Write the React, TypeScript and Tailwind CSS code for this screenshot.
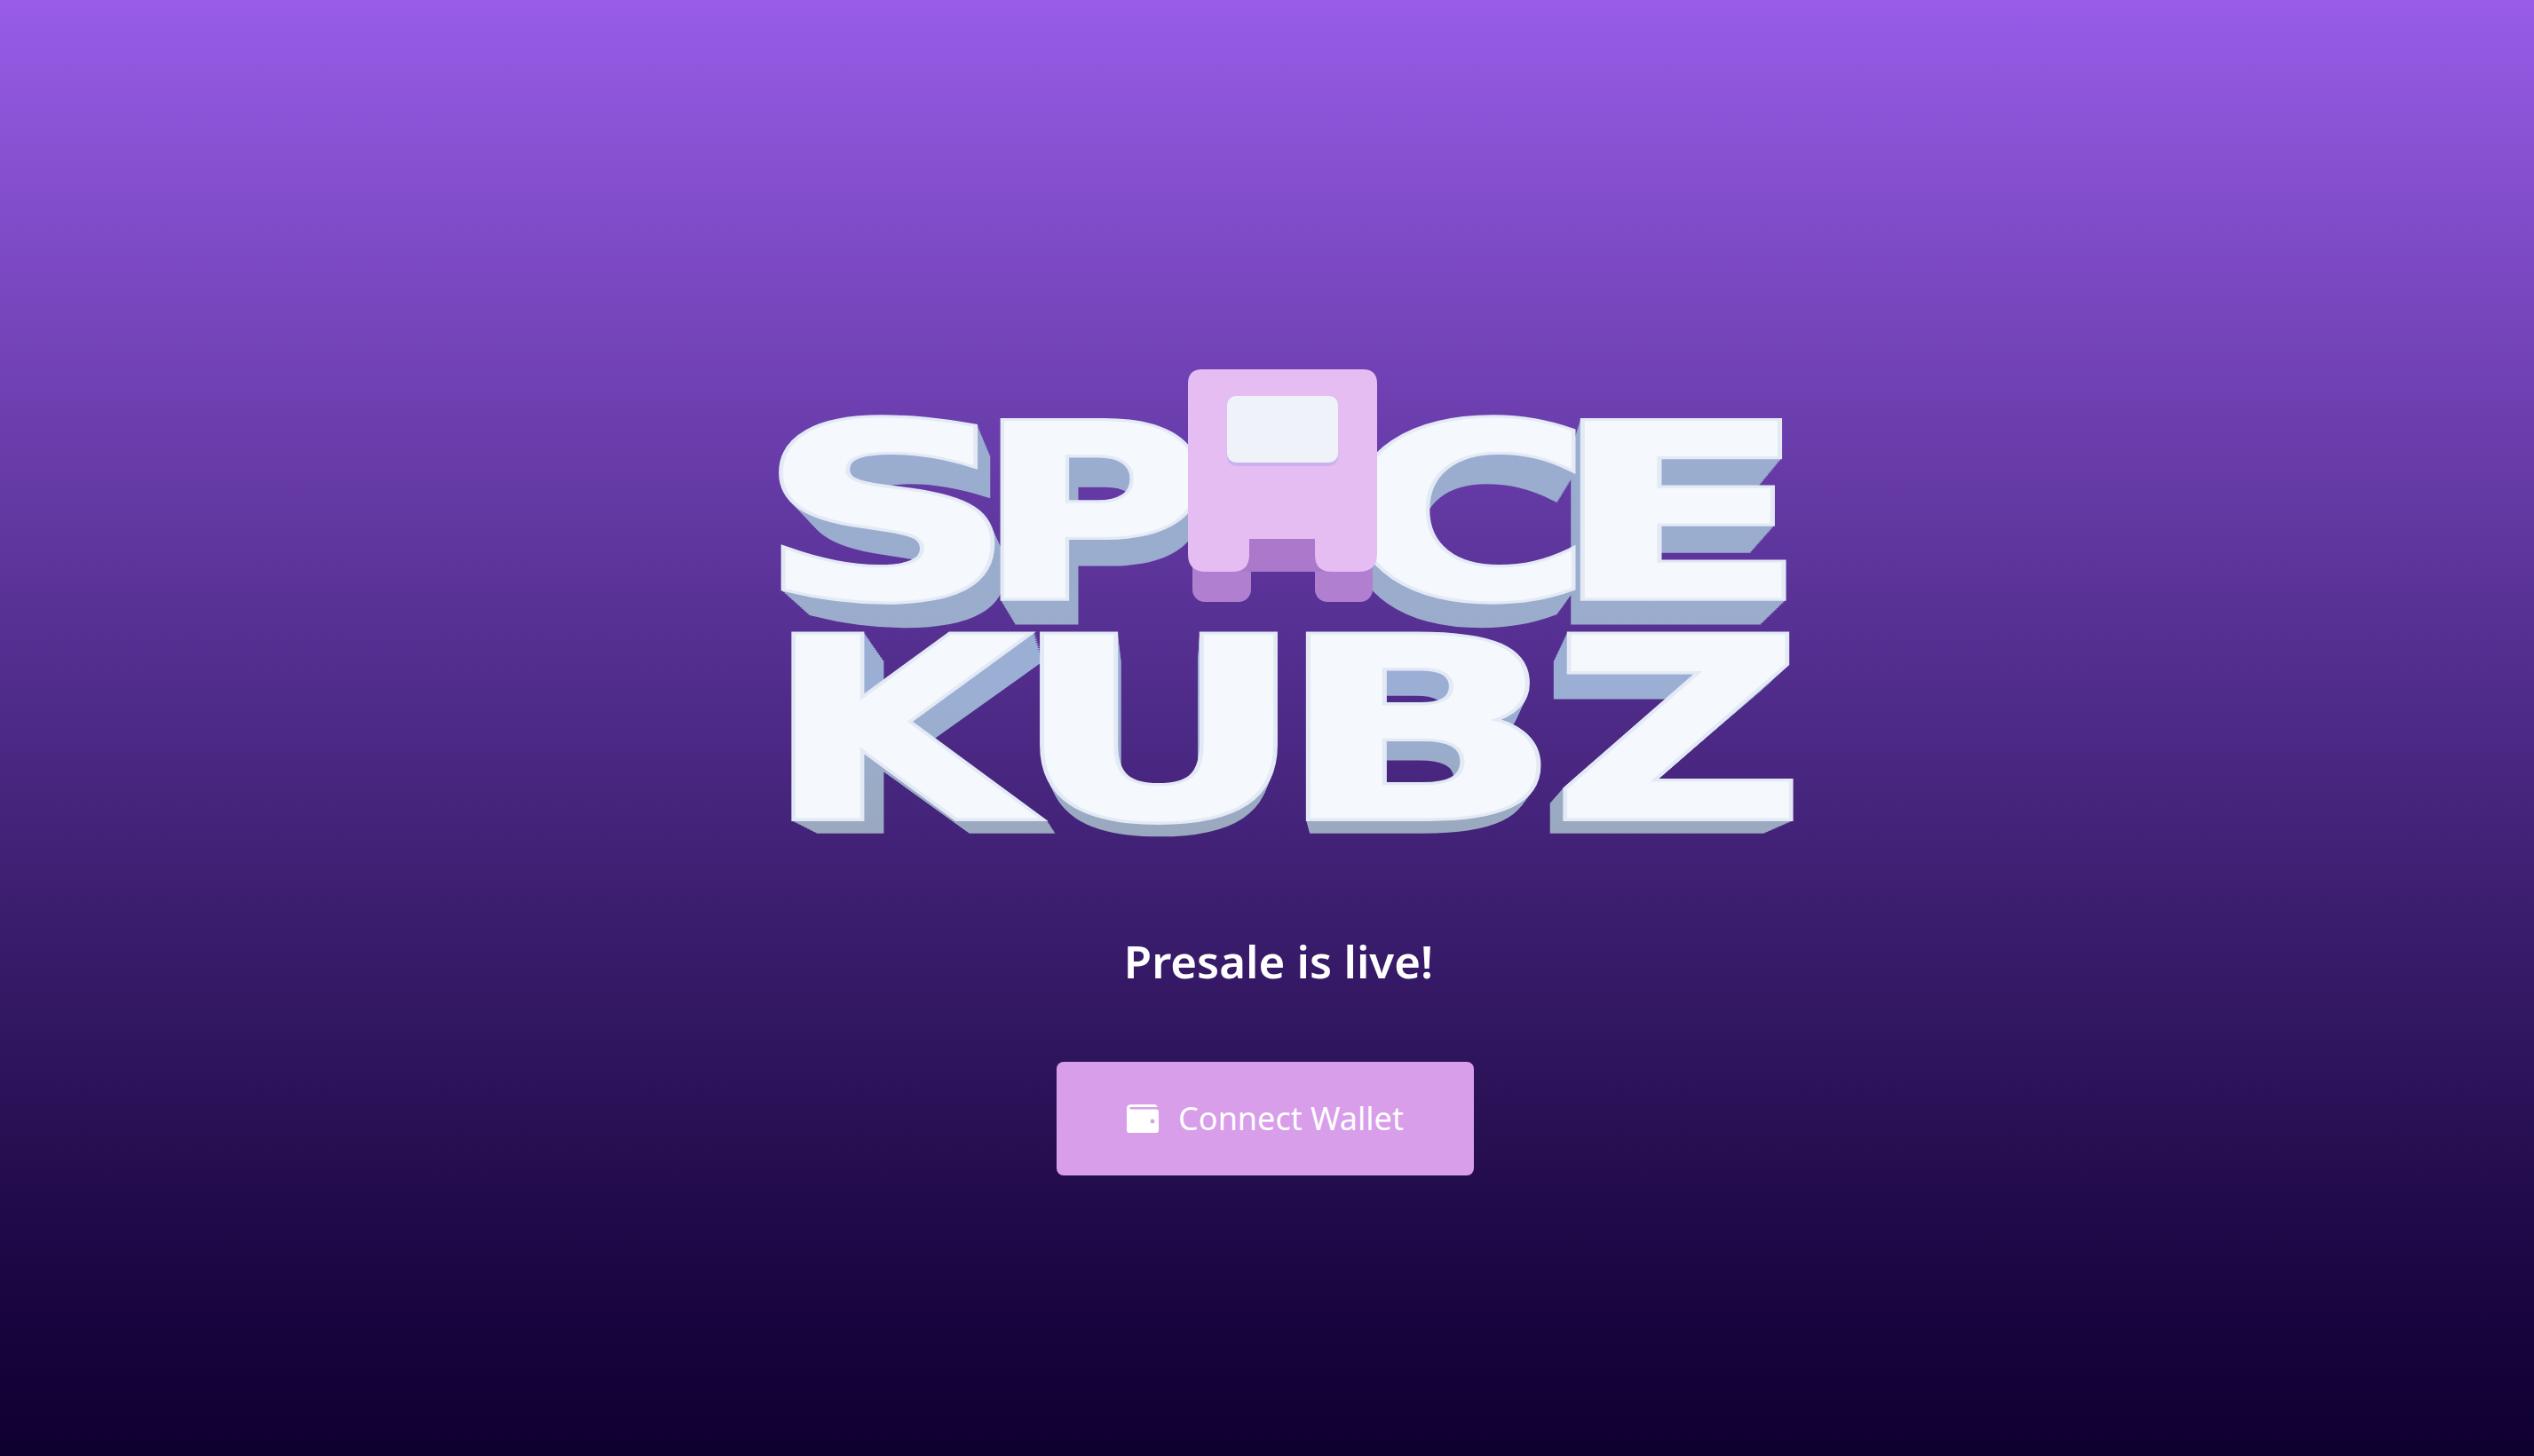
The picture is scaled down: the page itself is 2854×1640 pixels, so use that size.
type Letter = {
  ch: string;
  x0: number; // ink left, page px
  x1: number; // ink right, page px
  inkL: number;
  inkR: number;
  cx: number; // where the depth lines run to
};

// ink edges are per 100 font units
const TOP: Letter[] = [
  { ch: "S", x0: 878, x1: 1120, inkL: 6, inkR: 66, cx: 1300 },
  { ch: "P", x0: 1131, x1: 1350, inkL: 9, inkR: 70, cx: 1350 },
  { ch: "C", x0: 1530, x1: 1773, inkL: 5, inkR: 68, cx: 1500 },
  { ch: "E", x0: 1785, x1: 2010, inkL: 9, inkR: 62, cx: 1630 },
];

const BOTTOM: Letter[] = [
  { ch: "K", x0: 896, x1: 1162, inkL: 9, inkR: 79, cx: 1317 },
  { ch: "U", x0: 1174, x1: 1436, inkL: 8.5, inkR: 72.7, cx: 1317 },
  { ch: "B", x0: 1476, x1: 1733, inkL: 9, inkR: 70, cx: 1530 },
  { ch: "Z", x0: 1760, x1: 2018, inkL: 3, inkR: 69, cx: 1530 },
];

const ROW1 = { baseline: 673, sy: 2.72, kx: 0.073, ky: 0.04, vy: 1352 };
const ROW2 = { baseline: 921, sy: 2.82, kx: 0.065, ky: 0.086, vy: 1088 };

const DEPTH = Array.from({ length: 16 }, (_, i) => (i + 1) / 16);

const LETTER_CLASS = "font-['DejaVu_Sans',sans-serif] font-bold text-[100px]";

function place(l: Letter, baseline: number, sy: number) {
  const sx = (l.x1 - l.x0) / (l.inkR - l.inkL);
  return `translate(${l.x0 - l.inkL * sx} ${baseline}) scale(${sx} ${sy})`;
}

function Depth({ l, row, fill }: { l: Letter; row: typeof ROW1; fill: string }) {
  return (
    <>
      {DEPTH.map((t) => (
        <text
          key={t}
          transform={`translate(${l.cx} ${row.vy}) scale(${1 - row.kx * t} ${1 - row.ky * t}) translate(${-l.cx} ${-row.vy}) ${place(l, row.baseline, row.sy)}`}
          className={LETTER_CLASS}
          fill={fill}
          stroke={fill}
          strokeWidth={2.6}
        >
          {l.ch}
        </text>
      ))}
    </>
  );
}

function Front({ l, row }: { l: Letter; row: typeof ROW1 }) {
  return (
    <>
      <text transform={place(l, row.baseline, row.sy)} className={LETTER_CLASS} fill="#e3eaf5" stroke="#e3eaf5" strokeWidth={2.8}>
        {l.ch}
      </text>
      <text transform={place(l, row.baseline, row.sy)} className={LETTER_CLASS} fill="#f5f8fd" stroke="#f5f8fd" strokeWidth={0.4}>
        {l.ch}
      </text>
    </>
  );
}

function Logo() {
  return (
    <svg viewBox="860 410 1180 580" className="w-[1180px] h-[580px] ml-[46px] shrink-0">
      <defs>
        <linearGradient id="depthTop" x1="0" y1="0" x2="0" y2="1">
          <stop offset="0" stopColor="#9aadd1" />
          <stop offset="1" stopColor="#9bacca" />
        </linearGradient>
        <linearGradient id="depthBottom" x1="0" y1="0" x2="0" y2="1">
          <stop offset="0.3" stopColor="#9bafd4" />
          <stop offset="0.8" stopColor="#9aa9bf" />
        </linearGradient>
      </defs>

      {TOP.map((l) => (
        <Depth key={l.ch} l={l} row={ROW1} fill="url(#depthTop)" />
      ))}
      {BOTTOM.map((l) => (
        <Depth key={l.ch} l={l} row={ROW2} fill="url(#depthBottom)" />
      ))}
      {TOP.map((l) => (
        <Front key={l.ch} l={l} row={ROW1} />
      ))}
      {BOTTOM.map((l) => (
        <Front key={l.ch} l={l} row={ROW2} />
      ))}

      {/* the kub standing in for the A */}
      <rect x="1343" y="610" width="66" height="68" rx="14" fill="#b07fd0" />
      <rect x="1481" y="610" width="65" height="68" rx="14" fill="#b07fd0" />
      <rect x="1400" y="600" width="90" height="44" fill="#ac78cb" />
      <path
        d="M1338 432 Q1338 416 1354 416 H1535 Q1551 416 1551 432 V624 Q1551 644 1530 644 H1500 Q1481 644 1481 625 V607 H1407 V625 Q1407 644 1388 644 H1358 Q1338 644 1338 624 Z"
        fill="#e5bdf3"
      />
      <rect x="1382" y="450" width="125" height="75" rx="10" fill="#c9b2ee" />
      <rect x="1382" y="446" width="125" height="75" rx="10" fill="#eff2f8" />
    </svg>
  );
}

function WalletIcon() {
  return (
    <svg viewBox="0 0 36 32" className="w-9 h-8 shrink-0" fill="#fff">
      <path d="M5 0 H31 Q34 0 34.5 3 H3.5 Q3 5.5 5 5.5 H33 Q36 5.5 36 8.5 V29 Q36 32 33 32 H3 Q0 32 0 29 V5 Q0 0 5 0 Z" />
      <circle cx="29" cy="19" r="2.4" fill="#d89ee9" />
    </svg>
  );
}

export default function App() {
  return (
    <div className="min-h-screen h-[1640px] overflow-hidden flex flex-col items-center pt-[410px] bg-gradient-to-b from-[#985ce8] to-[#0e002f]">
      <Logo />
      <h1 className="mt-[57px] ml-[26px] text-[51px] leading-[70px] font-semibold text-white font-['Noto_Sans',sans-serif]">
        Presale is live!
      </h1>
      <button className="mt-[79px] mr-[4px] w-[470px] h-[128px] rounded-lg bg-[#d89ee9] text-white flex items-center justify-center gap-[22px] text-[36px] font-normal font-['Noto_Sans',sans-serif]">
        <WalletIcon />
        Connect Wallet
      </button>
    </div>
  );
}
